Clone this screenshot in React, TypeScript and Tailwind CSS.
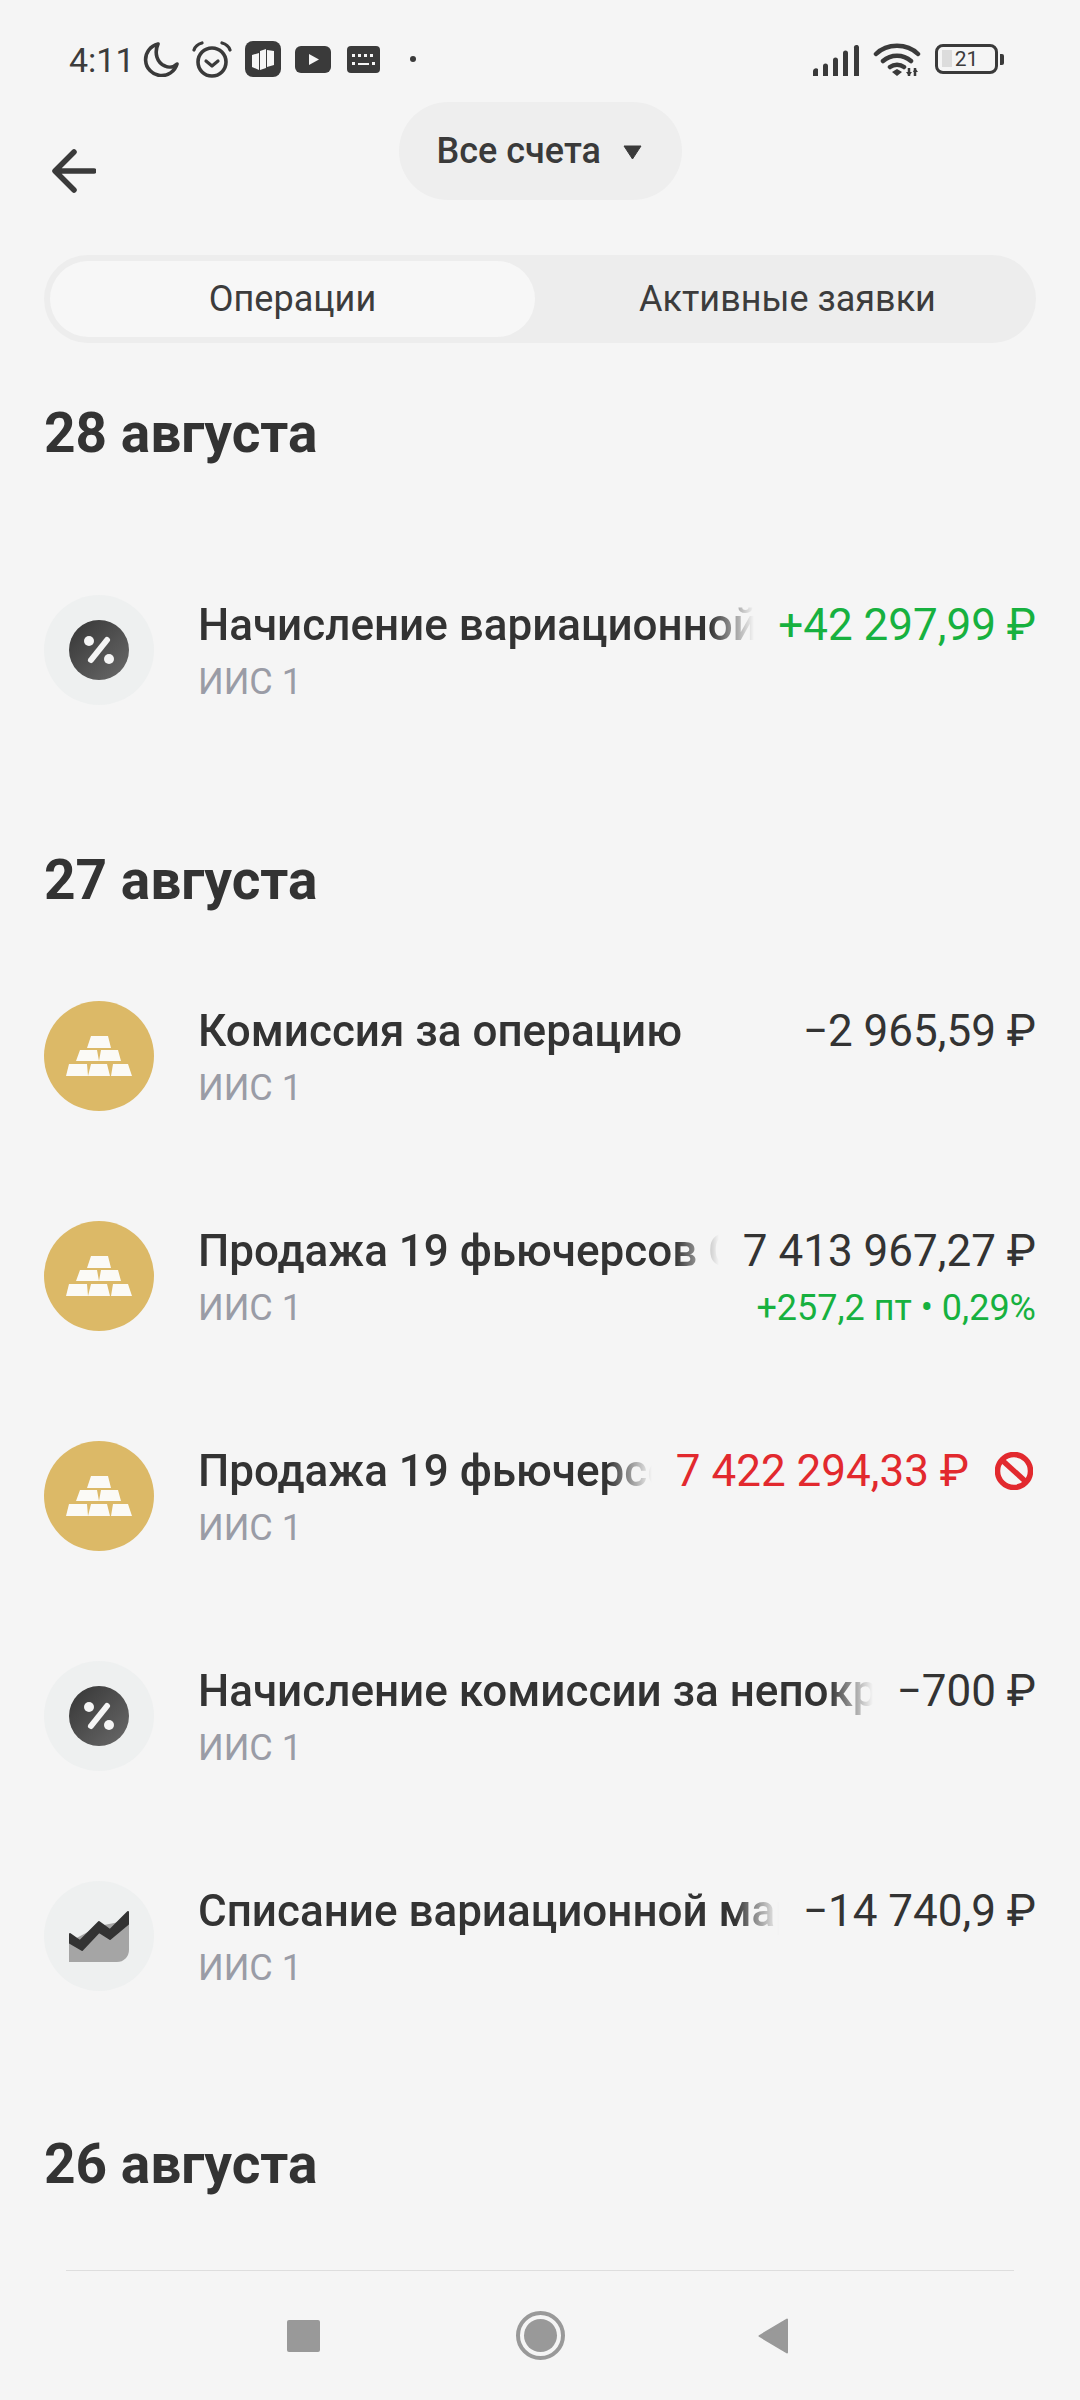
const ICON_DARK = "#3a3a3a";

type RowData = {
  icon: "gold" | "percent" | "chart";
  title: string;
  amount: string;
  amountClass?: string;
  extra?: string;
  blocked?: boolean;
};

const lastDay: RowData[] = [
  {
    icon: "percent",
    title: "Начисление вариационной маржи",
    amount: "+42 297,99 ₽",
    amountClass: "text-[#17b13f]",
  },
];

const prevDay: RowData[] = [
  { icon: "gold", title: "Комиссия за операцию", amount: "−2 965,59 ₽" },
  {
    icon: "gold",
    title: "Продажа 19 фьючерсов GOLD-9.23",
    amount: "7 413 967,27 ₽",
    extra: "+257,2 пт • 0,29%",
  },
  {
    icon: "gold",
    title: "Продажа 19 фьючерсов GOLD-9.23",
    amount: "7 422 294,33 ₽",
    amountClass: "text-[#e2292e]",
    blocked: true,
  },
  { icon: "percent", title: "Начисление комиссии за непокрытую позицию", amount: "−700 ₽" },
  { icon: "chart", title: "Списание вариационной маржи", amount: "−14 740,9 ₽" },
];

function StatusBar() {
  return (
    <div className="flex h-[102px] items-start pl-[69px] pt-[41px]">
      <span className="mr-[8px] text-[34px] leading-[38px] text-[#3c3c3c]">4:11</span>
      <svg width="36" height="36" viewBox="0 0 36 36" className="mr-[13px]">
        <path d="M15 3a16 16 0 1 0 19 20c-3 3-8 4-12 2C14 22 11 12 15 3z" fill="none" stroke={ICON_DARK} strokeWidth="3.6" strokeLinejoin="round" />
      </svg>
      <svg width="40" height="37" viewBox="0 0 40 37" className="mr-[13px]">
        <circle cx="20" cy="21" r="14" fill="none" stroke={ICON_DARK} strokeWidth="3.6" />
        <path d="M14 20l6 5 6-5" fill="none" stroke={ICON_DARK} strokeWidth="3.2" strokeLinecap="round" strokeLinejoin="round" />
        <path d="M2 9c1-3 4-6 8-7M38 9c-1-3-4-6-8-7" fill="none" stroke={ICON_DARK} strokeWidth="3.2" strokeLinecap="round" />
      </svg>
      <svg width="36" height="36" viewBox="0 0 36 36" className="mr-[14px]">
        <rect width="36" height="36" rx="8" fill={ICON_DARK} />
        <path d="M7 14l7-2v17l-7-3zM15 10l6-2v19l-6 2zM22 9l7 1v14l-7 2z" fill="#f5f5f5" />
      </svg>
      <svg width="36" height="27" viewBox="0 0 36 27" className="mr-[16px] mt-[5px]">
        <rect width="36" height="27" rx="6" fill={ICON_DARK} />
        <path d="M14 8l10 5.5L14 19z" fill="#f5f5f5" />
      </svg>
      <svg width="33" height="27" viewBox="0 0 33 27" className="mt-[5px]">
        <rect width="33" height="27" rx="4" fill={ICON_DARK} />
        <path d="M5 8h3v3H5zM11 8h3v3h-3zM17 8h3v3h-3zM23 8h3v3h-3zM5 16h3v3H5zM11 17h11v2H11zM25 16h3v3h-3z" fill="#f5f5f5" />
      </svg>
      <span className="ml-[30px] mt-[15px] size-[6px] rounded-full bg-[#3a3a3a]" />
      <svg width="48" height="31" viewBox="0 0 48 31" className="ml-auto mt-[4px]">
        <path d="M1 26a3 3 0 0 1 5-2v7H1zM11 21a2.500 2.500 0 0 1 5 0v10h-5zM21 15a2.500 2.500 0 0 1 5 0v16h-5zM31 8a2.500 2.500 0 0 1 5 0v23h-5zM42 3a2.500 2.500 0 0 1 5-1v29h-5z" fill={ICON_DARK} />
      </svg>
      <svg width="48" height="34" viewBox="0 0 48 34" className="ml-[13px] mt-[2px]">
        <path d="M3 11C14 0 34 0 45 11M10 18c8-7 20-7 28 0M17 24c4-3 10-3 14 0" fill="none" stroke={ICON_DARK} strokeWidth="4.500" strokeLinecap="round" />
        <path d="M19 29l5-3 5 3-5 4z" fill={ICON_DARK} />
        <path d="M36 25v8M42 25v8" stroke={ICON_DARK} strokeWidth="2.500" />
        <path d="M33 29l3 4 3-4zM40 29l2-4 3 4z" fill={ICON_DARK} />
      </svg>
      <div className="ml-[14px] mr-[76px] mt-[3px] flex items-center">
        <div className="relative flex h-[30px] w-[63px] items-center justify-center rounded-[8px] border-[3.5px] border-[#3a3a3a]">
          <span className="absolute left-[4px] top-[3px] h-[17px] w-[10px] bg-[#dcdcdc]" />
          <span className="relative text-[21px] leading-[22px] text-[#3c3c3c]">21</span>
        </div>
        <span className="ml-[2px] h-[11px] w-[4px] rounded-r-[2px] bg-[#3a3a3a]" />
      </div>
    </div>
  );
}

function TopBar() {
  return (
    <div className="relative flex h-[98px] justify-center">
      <svg width="44" height="44" viewBox="0 0 44 44" className="absolute left-[52px] top-[47px]">
        <path d="M42 22H4M22 3 3 22l19 19" fill="none" stroke={ICON_DARK} strokeWidth="5.500" strokeLinecap="round" strokeLinejoin="round" />
      </svg>
      <div className="flex w-[283px] items-center rounded-full bg-[#eeeeee] pl-[38px]">
        <span className="text-[36px] font-medium leading-[40px] text-[#3a3a3a]">Все счета</span>
        <svg width="19" height="15" viewBox="0 0 19 15" className="ml-[22px] mt-[2px]">
          <path d="M1 1h17l-8.500 13z" fill={ICON_DARK} stroke={ICON_DARK} strokeLinejoin="round" />
        </svg>
      </div>
    </div>
  );
}

function Tabs() {
  return (
    <div className="mx-[44px] mt-[55px] flex h-[88px] rounded-full bg-[#ededed] p-[6px]">
      <div className="flex w-[485px] items-center justify-center rounded-full bg-[#f7f7f7] text-[36px] leading-[40px] text-[#3c3c3c]">
        Операции
      </div>
      <div className="flex flex-1 items-center justify-center pl-[10px] text-[36px] leading-[40px] text-[#3c3c3c]">
        Активные заявки
      </div>
    </div>
  );
}

function GoldIcon() {
  return (
    <div className="flex size-[110px] shrink-0 items-center justify-center rounded-full bg-[#dcb967]">
      <svg width="66" height="41" viewBox="0 0 66 41" fill="#fbfaf6">
        <path d="M25 0h17l3 12H21zM14 14h17l2 11H10zM35 14h17l3 11H33zM3 28h18l1 12H0zM25 28h16l3 12H22zM47 28h15l4 12H45z" />
      </svg>
    </div>
  );
}

function PercentIcon() {
  return (
    <div className="flex size-[110px] shrink-0 items-center justify-center rounded-full bg-[#eef0f0]">
      <svg width="60" height="60" viewBox="0 0 60 60">
        <defs>
          <linearGradient id="pct" x1="0" y1="0" x2="1" y2="1">
            <stop offset="0" stopColor="#353535" />
            <stop offset="1" stopColor="#6a6a6a" />
          </linearGradient>
        </defs>
        <circle cx="30" cy="30" r="30" fill="url(#pct)" />
        <circle cx="20" cy="21" r="5" fill="#f5f5f5" />
        <circle cx="40" cy="39" r="5" fill="#f5f5f5" />
        <path d="M22 40l16-20" stroke="#f5f5f5" strokeWidth="6" strokeLinecap="round" />
      </svg>
    </div>
  );
}

function ChartIcon() {
  return (
    <div className="flex size-[110px] shrink-0 items-center justify-center rounded-full bg-[#eef0f0]">
      <svg width="60" height="53" viewBox="0 0 60 53">
        <path d="M0 32 30 16l30-6v30a12 12 0 0 1-12 12H0z" fill="#a5a5a5" />
        <path d="M1 24l10 7L30 12l11 8L59 2v12L41 29l-11-7-17 18-12-7z" fill="#333333" stroke="#333333" strokeWidth="2" strokeLinejoin="round" />
      </svg>
    </div>
  );
}

function Row({ row }: { row: RowData }) {
  return (
    <div className="flex h-[220px] items-center pl-[44px] pr-[44px]">
      {row.icon === "gold" && <GoldIcon />}
      {row.icon === "percent" && <PercentIcon />}
      {row.icon === "chart" && <ChartIcon />}
      <div className="ml-[44px] min-w-0 flex-1 pt-[8px]">
        <div className="flex h-[56px] items-center">
          <div className="min-w-0 flex-1 overflow-hidden whitespace-nowrap text-[44px] font-medium leading-[56px] text-[#333333] [mask-image:linear-gradient(to_left,transparent,black_44px)]">
            {row.title}
          </div>
          <div className={`ml-[24px] shrink-0 whitespace-nowrap text-[44px] leading-[56px] ${row.amountClass ?? "text-[#333333]"}`}>
            {row.amount}
          </div>
          {row.blocked && (
            <svg width="38" height="38" viewBox="0 0 38 38" className="ml-[26px] mr-[3px] shrink-0">
              <circle cx="19" cy="19" r="16.500" fill="none" stroke="#e2292e" strokeWidth="5.500" />
              <path d="M8 9l22 20" stroke="#e2292e" strokeWidth="5.500" />
            </svg>
          )}
        </div>
        <div className="flex h-[58px] items-center justify-between">
          <span className="text-[36px] leading-[44px] text-[#9a9ca6]">ИИС 1</span>
          {row.extra && <span className="text-[36px] leading-[40px] text-[#17b13f]">{row.extra}</span>}
        </div>
      </div>
    </div>
  );
}

function DayTitle({ children, className }: { children: string; className: string }) {
  return (
    <h2 className={`pl-[44px] text-[55px] font-bold leading-[60px] text-[#333333] ${className}`}>
      {children}
    </h2>
  );
}

function BottomNav() {
  return (
    <div className="mx-[66px] mt-auto flex h-[130px] items-center border-t border-[#dedede] pl-[221px]">
      <span className="h-[32px] w-[33px] rounded-[2px] bg-[#999999]" />
      <span className="ml-[196px] flex size-[49px] items-center justify-center rounded-full border-[4px] border-[#999999]">
        <span className="size-[33px] rounded-full bg-[#999999]" />
      </span>
      <svg width="31" height="36" viewBox="0 0 31 36" className="ml-[193px]">
        <path d="M29 1.500v33L1.500 18z" fill="#999999" stroke="#999999" strokeWidth="2" strokeLinejoin="round" />
      </svg>
    </div>
  );
}

export default function App() {
  return (
    <div className="flex h-[2400px] w-[1080px] flex-col overflow-hidden bg-[#f5f5f5] font-['Roboto',sans-serif]">
      <StatusBar />
      <TopBar />
      <Tabs />
      <DayTitle className="mt-[60px]">28 августа</DayTitle>
      <div className="mt-[77px]">
        {lastDay.map((row) => (
          <Row key={row.title} row={row} />
        ))}
      </div>
      <DayTitle className="mt-[90px]">27 августа</DayTitle>
      <div className="mt-[36px]">
        {prevDay.map((row, i) => (
          <Row key={i} row={row} />
        ))}
      </div>
      <DayTitle className="mt-[88px]">26 августа</DayTitle>
      <BottomNav />
    </div>
  );
}
